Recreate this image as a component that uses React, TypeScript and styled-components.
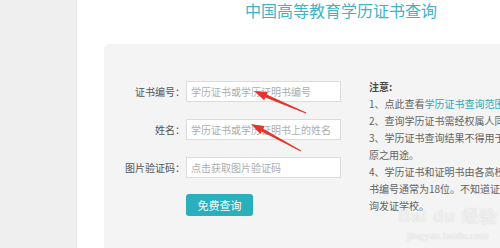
import React from 'react';
import styled, { createGlobalStyle } from 'styled-components';

const GlobalStyle = createGlobalStyle`
  html, body {
    margin: 0;
    padding: 0;
    background: #ffffff;
  }
  body {
    font-family: 'Noto Sans CJK SC', 'Noto Sans', sans-serif;
  }
`;

const Page = styled.div`
  position: relative;
  display: flex;
  width: 500px;
  height: 248px;
  overflow: hidden;
`;

const Sidebar = styled.div`
  width: 77px;
  flex-shrink: 0;
  background: #efefef;
  box-shadow: inset -1px 0 0 #e9e9e9;
`;

const Main = styled.div`
  flex: 1;
  display: flex;
  flex-direction: column;
  padding-left: 27px;
  min-width: 0;
`;

const Title = styled.h1`
  margin: 0 0 0 141px;
  height: 44px;
  font-size: 16px;
  line-height: 21px;
  font-weight: 400;
  color: #3db3c4;
  white-space: nowrap;
`;

const Card = styled.div`
  flex: 1;
  display: flex;
  align-items: flex-start;
  padding-top: 33px;
  background: #f4f4f4;
  border-radius: 5px 0 0 0;
`;

const Form = styled.div`
  display: grid;
  grid-template-columns: 81px 155px;
  column-gap: 1px;
  row-gap: 17px;
  align-items: center;
  margin-top: 4px;
`;

const Label = styled.label`
  text-align: right;
  font-size: 10px;
  color: #555555;
  white-space: nowrap;
`;

const Field = styled.input`
  box-sizing: border-box;
  width: 155px;
  height: 21px;
  padding: 0 4px;
  border: 1px solid #dcdcdc;
  background: #ffffff;
  font-family: inherit;
  font-size: 10px;
  color: #555555;
  outline: none;

  &::placeholder {
    color: #adadad;
  }
`;

const SubmitButton = styled.button`
  grid-column: 2;
  width: 67px;
  height: 22px;
  margin-top: -1px;
  padding: 0;
  border: none;
  border-radius: 3px;
  background: #2aafbd;
  color: #ffffff;
  font-family: inherit;
  font-size: 11px;
  cursor: pointer;
`;

const Divider = styled.div`
  width: 1px;
  height: 138px;
  margin-left: 16px;
  background: #e3e3e3;
`;

const Notes = styled.div`
  margin-left: 12px;
  padding-top: 1px;
  font-size: 10px;
  line-height: 17px;
  color: #626262;
  white-space: nowrap;
`;

const NoteHead = styled.div`
  font-weight: 700;
  color: #4a4a4a;
`;

const NoteLink = styled.a`
  color: #2aa9ba;
  text-decoration: none;
`;

const Overlay = styled.svg`
  position: absolute;
  left: 0;
  top: 0;
  pointer-events: none;
`;

const Watermark = styled.div`
  position: absolute;
  left: 398px;
  top: 205px;
  display: flex;
  flex-direction: column;
  align-items: center;
  color: rgba(255, 255, 255, 0.7);
  text-shadow: 0 0 1px rgba(160, 160, 160, 0.5);
  pointer-events: none;
`;

const MarkBig = styled.span`
  font-family: 'Liberation Sans', sans-serif;
  font-size: 17px;
  font-weight: 700;
  line-height: 24px;
  letter-spacing: 1px;
`;

const MarkSmall = styled.span`
  font-family: 'Liberation Serif', serif;
  font-size: 11px;
  line-height: 12px;
`;

type Pt = [number, number];

const arrowPoints = (tail: Pt, tip: Pt) => {
  const dx = tip[0] - tail[0];
  const dy = tip[1] - tail[1];
  const len = Math.hypot(dx, dy);
  const ux = dx / len;
  const uy = dy / len;
  const nx = -uy;
  const ny = ux;
  const headLen = 13;
  const bx = tip[0] - ux * headLen;
  const by = tip[1] - uy * headLen;
  const pts: Pt[] = [
    [tail[0] + nx * 0.4, tail[1] + ny * 0.4],
    [bx + nx * 1.6, by + ny * 1.6],
    [bx + nx * 4.5, by + ny * 4.5],
    tip,
    [bx - nx * 4.5, by - ny * 4.5],
    [bx - nx * 1.6, by - ny * 1.6],
    [tail[0] - nx * 0.4, tail[1] - ny * 0.4],
  ];
  return pts.map((p) => `${p[0].toFixed(1)},${p[1].toFixed(1)}`).join(' ');
};

const App = () => (
  <>
    <GlobalStyle />
    <Page>
      <Sidebar />
      <Main>
        <Title>中国高等教育学历证书查询</Title>
        <Card>
          <Form>
            <Label>证书编号：</Label>
            <Field placeholder="学历证书或学历证明书编号" />
            <Label>姓名：</Label>
            <Field placeholder="学历证书或学历证明书上的姓名" />
            <Label>图片验证码：</Label>
            <Field placeholder="点击获取图片验证码" />
            <SubmitButton>免费查询</SubmitButton>
          </Form>
          <Divider />
          <Notes>
            <NoteHead>注意:</NoteHead>
            <div>
              1、点此查看<NoteLink href="#">学历证书查询范围</NoteLink>
            </div>
            <div>2、查询学历证书需经权属人同意。</div>
            <div>3、学历证书查询结果不得用于违背权属人意</div>
            <div>原之用途。</div>
            <div>4、学历证书和证明书由各高校颁发，证</div>
            <div>书编号通常为18位。不知道证书编号的，可咨</div>
            <div>询发证学校。</div>
          </Notes>
        </Card>
      </Main>
      <Watermark>
        <MarkBig>Bai du 经验</MarkBig>
        <MarkSmall>jingyan.baidu.com</MarkSmall>
      </Watermark>
      <Overlay width="500" height="248" viewBox="0 0 500 248">
        <polygon points={arrowPoints([306, 113], [254, 91])} fill="#e8322b" />
        <polygon points={arrowPoints([301, 151], [251, 124])} fill="#e8322b" />
      </Overlay>
    </Page>
  </>
);

export default App;
